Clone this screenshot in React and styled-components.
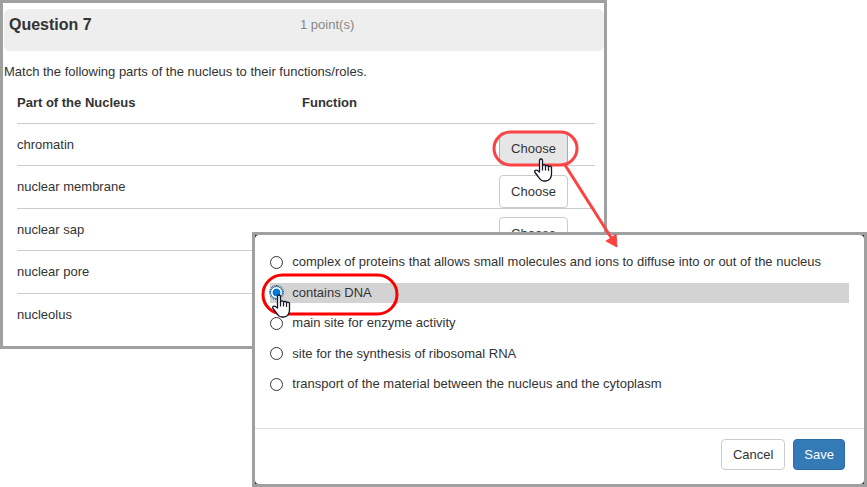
import React, { useState } from 'react';
import styled, { createGlobalStyle } from 'styled-components';

// the dialog covers the buttons of the last two parts while it is open
const parts = [
  { name: 'chromatin', hovered: true },
  { name: 'nuclear membrane' },
  { name: 'nuclear sap' },
  { name: 'nuclear pore', covered: true },
  { name: 'nucleolus', covered: true },
];

const roles = [
  'complex of proteins that allows small molecules and ions to diffuse into or out of the nucleus',
  'contains DNA',
  'main site for enzyme activity',
  'site for the synthesis of ribosomal RNA',
  'transport of the material between the nucleus and the cytoplasm',
];

const HandCursor = () => (
  <svg width="19" height="24" viewBox="0 0 19 24">
    <path
      d="M5.500 14V2.500a1.500 1.500 0 0 1 3 0V8.200a1.500 1.500 0 0 1 3 0.500a1.500 1.500 0 0 1 3 0.600a1.500 1.500 0 0 1 3 1V16c0 3.500-2 7-6 7h-1.500C7.500 23 6 21.500 4.500 19L1 14.500c-1-2 1-3 2.500-2z"
      fill="#fff"
      stroke="#15152a"
      strokeWidth="1.300"
      strokeLinejoin="round"
    />
    <path d="M8.500 8v4.500M11.500 8.700v3.800M14.500 9.300v3.700" stroke="#15152a" strokeWidth="1.200" />
  </svg>
);

const App = () => {
  const [picked, setPicked] = useState(1);

  return (
    <Stage>
      <GlobalStyle />
      <QuestionPanel>
        <QuestionBar>
          <QuestionTitle>Question 7</QuestionTitle>
          <Points>1 point(s)</Points>
        </QuestionBar>
        <Instructions>Match the following parts of the nucleus to their functions/roles.</Instructions>
        <MatchTable>
          <thead>
            <tr>
              <HeadCell scope="col">Part of the Nucleus</HeadCell>
              <HeadCell scope="col">Function</HeadCell>
            </tr>
          </thead>
          <tbody>
            {parts.map((part) => (
              <PartRow key={part.name}>
                <PartCell>{part.name}</PartCell>
                <ChooseCell>
                  {!part.covered && (
                    <ChooseWrap>
                      <ChooseButton type="button" $hovered={part.hovered}>Choose</ChooseButton>
                      {part.hovered && <ChooseCallout />}
                    </ChooseWrap>
                  )}
                </ChooseCell>
              </PartRow>
            ))}
          </tbody>
        </MatchTable>
      </QuestionPanel>

      <Dialog role="dialog" aria-label="Function">
        <DialogContent>
          <RoleList>
            {roles.map((role, i) => (
              <RoleLabel key={role} $picked={picked === i}>
                <Radio type="radio" name="role" checked={picked === i} onChange={() => setPicked(i)} />
                {role}
                {i === 1 && <RoleCallout />}
              </RoleLabel>
            ))}
          </RoleList>
          <DialogFooter>
            <Button type="button">Cancel</Button>
            <SaveButton type="button">Save</SaveButton>
          </DialogFooter>
        </DialogContent>
      </Dialog>
    </Stage>
  );
};
export default App;

const ChooseCallout = () => (
  <>
    <ChooseMarks width="130" height="120" viewBox="0 0 130 120" aria-hidden="true">
      <rect x="2" y="2" width="83" height="33" rx="16.500" fill="none" stroke="#fb4343" strokeWidth="3" />
      <path d="M73 35L120 109" stroke="#fb4343" strokeWidth="3" />
      <path d="M125 117L114 111L119 108L124 104Z" fill="#fb4343" stroke="#fb4343" strokeWidth="1" />
    </ChooseMarks>
    <ChooseHand><HandCursor /></ChooseHand>
  </>
);

const RoleCallout = () => (
  <>
    <RoleMarks width="138" height="44" viewBox="0 0 138 44" aria-hidden="true">
      <rect x="2" y="2" width="134" height="39" rx="19.500" fill="none" stroke="#fb0000" strokeWidth="3" />
    </RoleMarks>
    <RoleHand><HandCursor /></RoleHand>
  </>
);

const GlobalStyle = createGlobalStyle`
  body {
    margin: 0;
    background: #fff;
    color: #333;
    font-family: "Liberation Sans", Arial, sans-serif;
    font-size: 13px;
    line-height: 20px;
  }
`;

const Stage = styled.div`
  position: relative;
  min-height: 100vh;
`;

const QuestionPanel = styled.section`
  width: 70%;
  box-sizing: border-box;
  padding: 6px 0 11px 1px;
  border: 3px solid #a0a0a0;
`;

const QuestionBar = styled.header`
  display: flex;
  height: 42px;
  padding: 6px 5px;
  box-sizing: border-box;
  border-radius: 6px;
  background: #eee;
`;

const QuestionTitle = styled.h1`
  width: 49%;
  margin: 0 2px 0 0;
  font-size: 16px;
  line-height: 20px;
`;

const Points = styled.span`
  color: #888;
`;

const Instructions = styled.p`
  margin: 11px 0 0;
`;

const MatchTable = styled.table`
  width: calc(100% - 22px);
  margin-left: 13px;
  table-layout: fixed;
  border-collapse: separate;
  border-spacing: 0;
`;

const HeadCell = styled.th`
  height: 41px;
  padding: 0;
  border-bottom: 1px solid #ccc;
  text-align: left;

  &:first-child {
    width: 285px;
  }
`;

const PartCell = styled.td`
  height: 41px;
  padding: 0;
  border-bottom: 1px solid #ccc;
`;

const ChooseCell = styled(PartCell)`
  padding-right: 27px;
  text-align: right;
  vertical-align: bottom;
`;

const PartRow = styled.tr`
  &:nth-child(even) td {
    height: 42px;
  }

  &:last-child td {
    border-bottom: 0;
  }
`;

const ChooseWrap = styled.div`
  position: relative;
  display: inline-flex;
  vertical-align: bottom;
`;

const Button = styled.button`
  padding: 0 11px;
  height: 31px;
  border: 1px solid #ccc;
  border-radius: 4px;
  background: #fff;
  color: #333;
  font: inherit;
  cursor: pointer;
`;

const ChooseButton = styled(Button)`
  height: 33px;
  border-color: ${({ $hovered }) => ($hovered ? '#adadad' : '#ccc')};
  background: ${({ $hovered }) => ($hovered ? '#e6e6e6' : '#fff')};
`;

const SaveButton = styled(Button)`
  padding: 0 10px;
  border-color: #2e6da4;
  background: #337ab7;
  color: #fff;
`;

const Dialog = styled.section`
  position: absolute;
  top: 232px;
  left: 29.1%;
  right: 0;
  z-index: 1;
  border: 3px solid #a0a0a0;
  background: #222;
`;

const DialogContent = styled.div`
  border-radius: 4px;
  background: #fff;
`;

const RoleList = styled.div`
  display: flex;
  flex-direction: column;
  justify-content: space-between;
  min-height: 142px;
  padding: 17px 15px 34px;
`;

const RoleLabel = styled.label`
  position: relative;
  display: flex;
  align-items: center;
  gap: 9px;
  background: ${({ $picked }) => ($picked ? '#d3d3d3' : 'transparent')};
`;

const Radio = styled.input`
  width: 13px;
  height: 13px;
  margin: 0;
  appearance: none;
  box-sizing: border-box;
  border: 1px solid #333;
  border-radius: 50%;
  background: #fff;

  &:checked {
    border-color: #0078d7;
    background: radial-gradient(#0078d7 45%, #fff 55%);
    outline: 1px dotted #333;
  }
`;

const DialogFooter = styled.footer`
  display: flex;
  justify-content: flex-end;
  gap: 8px;
  padding: 10px 19px 14px;
  border-top: 1px solid #ddd;
`;

const Marks = styled.svg`
  position: absolute;
  z-index: 2;
  pointer-events: none;
`;

const ChooseMarks = styled(Marks)`
  top: -2px;
  left: -7px;
`;

const RoleMarks = styled(Marks)`
  top: -10px;
  left: -9px;
`;

const Hand = styled.span`
  position: absolute;
  z-index: 3;
  line-height: 0;
  pointer-events: none;
`;

const ChooseHand = styled(Hand)`
  top: 26px;
  left: 35px;
`;

const RoleHand = styled(Hand)`
  top: 11px;
  left: 2px;
`;
